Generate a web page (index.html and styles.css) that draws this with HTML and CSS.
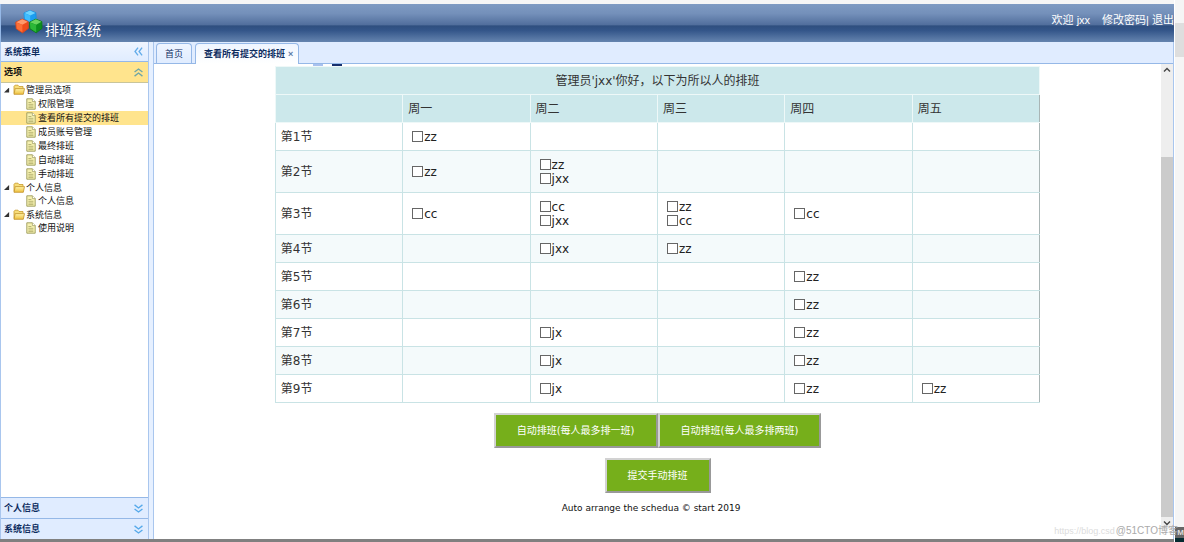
FILE: index.html
```html
<!DOCTYPE html>
<html lang="zh-CN">
<head>
<meta charset="utf-8">
<title>排班系统</title>
<link rel="stylesheet" href="styles.css">
</head>
<body>
<svg width="0" height="0" class="defs" aria-hidden="true">
  <defs>
    <linearGradient id="gold" x1="0" y1="0" x2="0" y2="1"><stop offset="0" stop-color="#fff3a8"/><stop offset="1" stop-color="#eebf3c"/></linearGradient>
    <symbol id="folder" viewBox="0 0 12 12"><path d="M1 9.5V2.2L2 1.2h3l1 1.3h4v2" fill="#f7dd79" stroke="#c99a2c" stroke-width=".8"/><path d="M1 10.3 2.2 4.6h9.3l-1.2 5.7z" fill="url(#gold)" stroke="#c2922a" stroke-width=".8"/></symbol>
    <symbol id="doc" viewBox="0 0 10 12"><path d="M.8.8h5.6l2.8 2.8v7.6H.8z" fill="#f6f1b0" stroke="#9c9a5a" stroke-width=".9"/><path d="M6.4.8v2.8h2.8" fill="#fff" stroke="#9c9a5a" stroke-width=".7"/><path d="M2.4 4.5h3M2.4 6.3h5M2.4 8h5M2.4 9.6h5" stroke="#a9a764" stroke-width=".8"/></symbol>
    <symbol id="down" viewBox="0 0 8 8"><path d="m.5.8 3.5 2.7L7.5.8M.5 4.4 4 7.1l3.5-2.7" fill="none" stroke="#55a9ea" stroke-width="1.2"/></symbol>
    <symbol id="up" viewBox="0 0 8 8"><path d="M.5 3.6 4 .9l3.5 2.7M.5 7.2 4 4.5l3.5 2.7" fill="none" stroke="#6fa6a6" stroke-width="1.2"/></symbol>
    <symbol id="left" viewBox="0 0 8 8"><path d="M3.6.5.9 4l2.7 3.5M7.2.5 4.5 4l2.7 3.5" fill="none" stroke="#64adea" stroke-width="1.2"/></symbol>
  </defs>
</svg>
<div class="app">
  <header class="banner">
    <div class="brand">
      <svg class="logo" viewBox="0 0 28 26" aria-hidden="true">
        <g stroke-linejoin="round" stroke-width="1">
          <path d="m15 1.5 5.8 2.2.4 6-5.7 3.8-6-3.4L9 4z" fill="#1b9df0" stroke="#1b8fe0"/>
          <path d="m15 1.6 5.4 2.3-5.2 2.6L9.4 4z" fill="#6dd3ff"/>
          <path d="M15.2 6.5v6.4L9.8 9.8l-.4-5.6z" fill="#3fbcff"/>
          <path d="m7.2 10.2 5.9 2.4.2 6.8-5.8 4.4-6.2-4-.5-6.6z" fill="#ee4c1c" stroke="#d9481c"/>
          <path d="m7.2 10.3 5.6 2.4-5.4 3-6.2-2.5z" fill="#ff9a6c"/>
          <path d="M7.4 15.7v7.6l-5.7-3.7-.5-6z" fill="#fc7038"/>
          <path d="m20.8 10.2 6 2.4.2 6.8-5.8 4.4-6.2-4-.5-6.6z" fill="#0d8f1e" stroke="#0e7d1c"/>
          <path d="m20.8 10.3 5.6 2.4-5.2 3-6.4-2.5z" fill="#69d35e"/>
          <path d="M21.1 15.7v7.6l-5.7-3.7-.5-6z" fill="#2cb738"/>
        </g>
      </svg>
      <span class="brand-name">排班系统</span>
    </div>
    <nav class="account"><span class="welcome">欢迎 jxx</span><a href="#">修改密码</a>| <a href="#">退出</a></nav>
  </header>
  <div class="workspace">
    <aside class="sidebar">
      <div class="panel-head">系统菜单<svg class="arrow"><use href="#left"/></svg></div>
      <button class="panel-head selected">选项<svg class="arrow"><use href="#up"/></svg></button>
      <ul class="tree">
        <li><div class="node"><i class="twist"></i><svg class="folder"><use href="#folder"/></svg>管理员选项</div>
          <ul>
            <li class="leaf"><svg class="doc"><use href="#doc"/></svg><a href="#">权限管理</a></li>
            <li class="leaf current"><svg class="doc"><use href="#doc"/></svg><a href="#">查看所有提交的排班</a></li>
            <li class="leaf"><svg class="doc"><use href="#doc"/></svg><a href="#">成员账号管理</a></li>
            <li class="leaf"><svg class="doc"><use href="#doc"/></svg><a href="#">最终排班</a></li>
            <li class="leaf"><svg class="doc"><use href="#doc"/></svg><a href="#">自动排班</a></li>
            <li class="leaf"><svg class="doc"><use href="#doc"/></svg><a href="#">手动排班</a></li>
          </ul></li>
        <li><div class="node"><i class="twist"></i><svg class="folder"><use href="#folder"/></svg>个人信息</div>
          <ul><li class="leaf"><svg class="doc"><use href="#doc"/></svg><a href="#">个人信息</a></li></ul></li>
        <li><div class="node"><i class="twist"></i><svg class="folder"><use href="#folder"/></svg>系统信息</div>
          <ul><li class="leaf"><svg class="doc"><use href="#doc"/></svg><a href="#">使用说明</a></li></ul></li>
      </ul>
      <button class="panel-head closed">个人信息<svg class="arrow"><use href="#down"/></svg></button>
      <button class="panel-head closed">系统信息<svg class="arrow"><use href="#down"/></svg></button>
    </aside>
    <div class="splitter"></div>
    <main class="main">
      <div class="tabs">
        <button class="tab">首页</button>
        <button class="tab active">查看所有提交的排班<span class="close">×</span></button>
      </div>
      <div class="view">
        <div class="content">
          <div class="clipped" aria-hidden="true"><i class="scrap-light"></i><i class="scrap-dark"></i></div>
          <table class="schedule">
            <thead>
              <tr><th colspan="6" class="caption">管理员'jxx'你好，以下为所以人的排班</th></tr>
              <tr><th></th><th>周一</th><th>周二</th><th>周三</th><th>周四</th><th>周五</th></tr>
            </thead>
            <tbody>
              <tr><td>第1节</td><td><label><input type="checkbox">zz</label></td><td></td><td></td><td></td><td></td></tr>
              <tr><td>第2节</td><td><label><input type="checkbox">zz</label></td><td><label><input type="checkbox">zz</label><label><input type="checkbox">jxx</label></td><td></td><td></td><td></td></tr>
              <tr><td>第3节</td><td><label><input type="checkbox">cc</label></td><td><label><input type="checkbox">cc</label><label><input type="checkbox">jxx</label></td><td><label><input type="checkbox">zz</label><label><input type="checkbox">cc</label></td><td><label><input type="checkbox">cc</label></td><td></td></tr>
              <tr><td>第4节</td><td></td><td><label><input type="checkbox">jxx</label></td><td><label><input type="checkbox">zz</label></td><td></td><td></td></tr>
              <tr><td>第5节</td><td></td><td></td><td></td><td><label><input type="checkbox">zz</label></td><td></td></tr>
              <tr><td>第6节</td><td></td><td></td><td></td><td><label><input type="checkbox">zz</label></td><td></td></tr>
              <tr><td>第7节</td><td></td><td><label><input type="checkbox">jx</label></td><td></td><td><label><input type="checkbox">zz</label></td><td></td></tr>
              <tr><td>第8节</td><td></td><td><label><input type="checkbox">jx</label></td><td></td><td><label><input type="checkbox">zz</label></td><td></td></tr>
              <tr><td>第9节</td><td></td><td><label><input type="checkbox">jx</label></td><td></td><td><label><input type="checkbox">zz</label></td><td><label><input type="checkbox">zz</label></td></tr>
            </tbody>
          </table>
          <div class="actions"><button class="action">自动排班(每人最多排一班)</button><button class="action">自动排班(每人最多排两班)</button></div>
          <div class="actions"><button class="action">提交手动排班</button></div>
          <footer class="copyright">Auto arrange the schedua © start 2019</footer>
        </div>
        <div class="scrollbar" aria-hidden="true">
          <svg class="scroll-arrow" viewBox="0 0 12 12"><path d="m3 7.5 3-3 3 3" fill="none" stroke="#444" stroke-width="1.4"/></svg>
          <div class="rail"><div class="thumb"></div></div>
          <svg class="scroll-arrow" viewBox="0 0 12 12"><path d="m3 4.5 3 3 3-3" fill="none" stroke="#444" stroke-width="1.4"/></svg>
        </div>
      </div>
    </main>
  </div>
</div>
<div class="edge"><div class="edge-block"></div><div class="edge-label">M</div><div class="edge-foot"></div></div>
<div class="marks"><span class="mark-url">https://blog.csd</span><span class="mark-site">@51CTO博客</span></div>
</body>
</html>
```
FILE: styles.css
```css
* { box-sizing: border-box; }
body {
  margin: 0;
  height: 100vh;
  display: grid;
  grid-template-columns: 1fr 10px;
  overflow: hidden;
  position: relative;
  background: #f6f6f6;
  font: 9px/14px "Liberation Sans", "Noto Sans CJK SC", sans-serif;
  color: #111;
}
button { font: inherit; color: inherit; margin: 0; }
a { color: inherit; text-decoration: none; }
ul { list-style: none; margin: 0; padding: 0; }
.defs { position: absolute; }

.app {
  display: flex;
  flex-direction: column;
  min-width: 0;
  height: 100vh;
  padding-top: 4px;
  border-bottom: 3px solid #808080;
}
.banner {
  height: 38px;
  flex: none;
  display: flex;
  justify-content: space-between;
  padding-left: 14px;
  color: #fff;
  background: linear-gradient(#7f9bc3 0, #7490ba 25%, #526f9d 54%, #2f4f7f 58%, #34568a 70%, #6584af 100%);
  border-left: 1px solid #95b8e7;
}
.brand { display: flex; align-items: flex-start; gap: 2px; }
.logo { width: 28px; height: 26px; margin-top: 5px; }
.brand-name { font-size: 14px; line-height: 20px; margin-top: 16px; }
.account { font-size: 11px; line-height: 16px; margin-top: 8px; white-space: pre; }
.welcome { margin-right: 12px; }

.workspace { flex: 1; display: flex; min-height: 0; background: #e0ecff; }
.sidebar {
  width: 149px;
  display: flex;
  flex-direction: column;
  border: solid #a9c6ee;
  border-width: 0 1px;
  background: #fff;
}
.panel-head {
  height: 20px;
  display: flex;
  align-items: center;
  justify-content: space-between;
  padding: 0 5px 0 3px;
  font-weight: bold;
  color: #0e2d5f;
  background: linear-gradient(#eff5ff, #e0ecff);
  border: 0;
  border-bottom: 1px solid #95b8e7;
}
.panel-head.selected { height: 21px; color: #111; background: #ffe48d; border-bottom-color: #c9c59a; }
.panel-head.closed { height: 21px; background: #e0ecff; border-bottom: 0; border-top: 1px solid #95b8e7; }
.arrow { width: 9px; height: 9px; }
.tree { flex: 1; }
.node, .leaf { display: flex; align-items: center; height: 14px; }
.node { height: 13px; padding-left: 3px; }
.tree > li:first-child > .node { height: 14px; }
.twist {
  width: 6px;
  height: 5px;
  margin-right: 3px;
  background: #333;
  clip-path: polygon(85% 0, 85% 100%, 0 100%);
}
.folder { width: 12px; height: 12px; margin-right: 1px; }
.leaf { padding-left: 25px; gap: 2px; }
.leaf.current { background: #ffe48d; }
.doc { width: 10px; height: 12px; }

.splitter { width: 4px; background: #e6f0ff; }
.main {
  flex: 1;
  min-width: 0;
  display: flex;
  flex-direction: column;
  border: solid #a9c6ee;
  border-width: 0 1px;
}
.tabs {
  height: 22px;
  flex: none;
  display: flex;
  align-items: flex-end;
  gap: 3px;
  padding-left: 2px;
  border-bottom: 1px solid #95b8e7;
}
.tab {
  height: 20px;
  padding: 0 8px;
  color: #0e2d5f;
  border: 1px solid #95b8e7;
  border-bottom: 0;
  border-radius: 4px 4px 0 0;
  background: linear-gradient(#eff5ff, #e0ecff);
}
.tab.active {
  height: 21px;
  margin-bottom: -1px;
  padding-right: 5px;
  font-weight: bold;
  background: linear-gradient(#eff5ff, #fff);
}
.close { margin-left: 3px; color: #5c7da8; }
.view { flex: 1; display: flex; min-height: 0; background: #fff; }
.content { flex: 1; min-width: 0; font-family: "DejaVu Sans", "Noto Sans CJK SC", sans-serif; }
.clipped { height: 2px; display: flex; gap: 9px; padding-left: 159px; }
.scrap-light { width: 10px; height: 2px; background: #a9c1ee; }
.scrap-dark { width: 10px; height: 2px; background: #17306e; }

.schedule {
  width: 76%;
  margin: 0 auto;
  table-layout: fixed;
  border-collapse: collapse;
  font-size: 12px;
  line-height: 14px;
  color: #333;
}
.schedule th, .schedule td { padding: 7px 5px 6px; border: 1px solid #c9e3e5; text-align: left; height: 28px; }
.schedule th { font-weight: normal; background: #cce8eb; border-color: #eef8f8; }
.schedule .caption { text-align: center; }
.schedule tbody tr:nth-child(even) { background: #f4fafb; }
.schedule tr:not(:first-child) th:last-child,
.schedule tbody td:last-child { border-right-color: #a9b5b5; }
.schedule label { display: flex; align-items: center; gap: 1px; height: 14px; padding-left: 4px; color: #222; }
.schedule input {
  appearance: none;
  width: 11px;
  height: 11px;
  margin: 0 0 2px;
  border: 1px solid #666;
  background: #fff;
}
.actions { display: flex; justify-content: center; margin-top: 10px; }
.action {
  height: 35px;
  padding: 0 21px;
  font-size: 10px;
  color: #fff;
  background: #76af1b;
  border: 2px solid;
  border-color: #d2d2d2 #999 #999 #d2d2d2;
}
.copyright { margin-top: 8px; padding-right: 13px; font-size: 9px; text-align: center; }

.scrollbar { width: 12px; display: flex; flex-direction: column; padding-bottom: 10px; background: linear-gradient(to top, #fff 10px, #eee 10px); }
.scroll-arrow { width: 12px; height: 12px; flex: none; }
.rail { flex: 1; padding-top: 81px; display: flex; }
.thumb { width: 12px; background: #cbcbcb; }

.edge { display: flex; flex-direction: column; padding-top: 23px; background: #f5f5f5; border-left: 1px solid #fff; }
.edge-block { height: 34px; background: #dedede; }
.edge-label { margin-top: auto; height: 11px; font-size: 8px; line-height: 11px; font-weight: bold; text-align: right; color: #ddd; background: #666; }
.edge-foot { height: 4px; background: #052a30; }
.marks { position: absolute; right: 6px; bottom: 4px; display: flex; align-items: baseline; gap: 1px; white-space: nowrap; }
.mark-url { font-size: 9px; color: #dcdcdc; }
.mark-site { font-size: 10px; color: #aaa; }
```
